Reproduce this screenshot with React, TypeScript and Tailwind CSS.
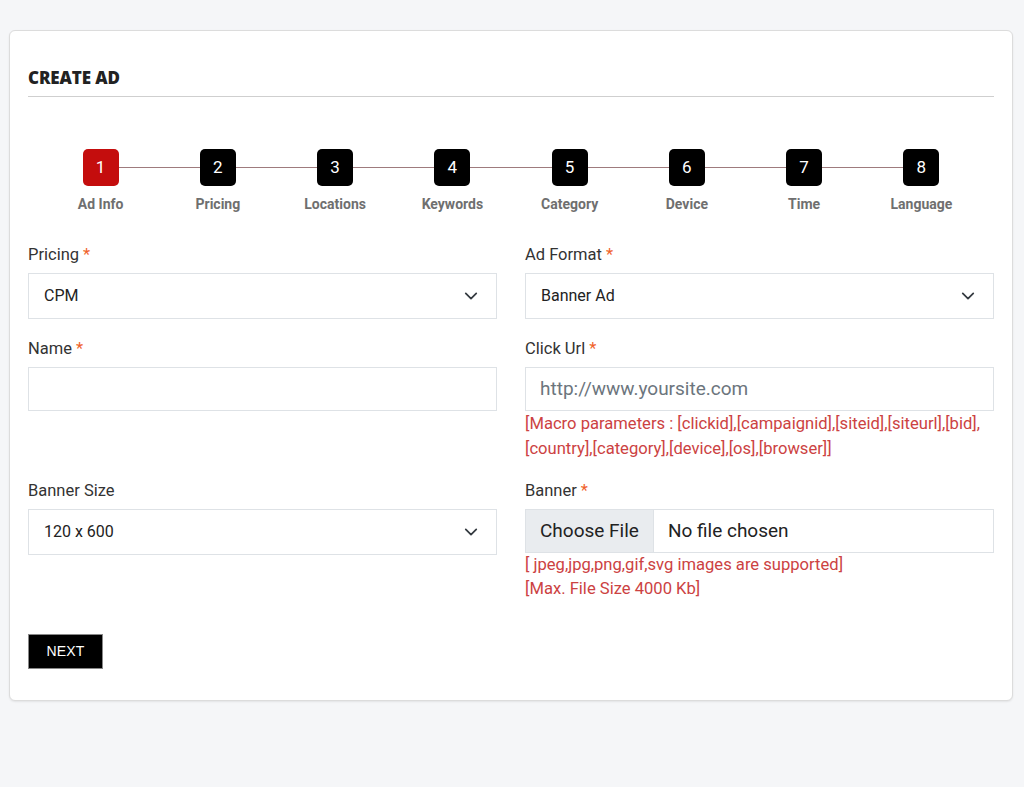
import React from "react";

const steps = ["Ad Info", "Pricing", "Locations", "Keywords", "Category", "Device", "Time", "Language"];

function Chevron() {
  return (
    <svg width="14" height="14" viewBox="0 0 16 16" fill="none" stroke="#343a40" strokeWidth="2" strokeLinecap="round" strokeLinejoin="round">
      <path d="M2 5l6 6 6-6" />
    </svg>
  );
}

function Label({ text, req }: { text: string; req?: boolean }) {
  return (
    <div className="text-[16.5px] leading-[24px] text-[#333] mb-[6px]">
      {text}
      {req && <span className="text-[#f0622a] ml-[4px]">*</span>}
    </div>
  );
}

function Select({ value }: { value: string }) {
  return (
    <div className="h-[46px] border border-[#dee2e6] bg-white flex items-center justify-between pl-[15px] pr-[18px] text-[16px] text-[#222]">
      <span>{value}</span>
      <Chevron />
    </div>
  );
}

export default function App() {
  return (
    <div className="min-h-screen bg-[#f5f6f8] pt-[30px] pl-[9px]" style={{ fontFamily: "Roboto, 'Liberation Sans', sans-serif" }}>
      <div className="w-[1004px] bg-white border border-[#dcdcdc] rounded-[6px] shadow-[0_1px_2px_rgba(0,0,0,0.08)] px-[18px] pt-[35px] pb-[31px]">
        <div className="border-b border-[#cfcfcf] pb-[6px]">
          <h1 className="text-[17px] leading-[24px] font-extrabold text-[#222] tracking-[-0.1px]" style={{ fontFamily: "'Open Sans', Lato, sans-serif" }}>
            CREATE AD
          </h1>
        </div>

        <div className="relative mt-[52px] mx-[14px] flex">
          <div className="absolute left-[58px] right-[58px] top-[18px] h-[1px] bg-[#9e7b7d]" />
          {steps.map((s, i) => (
            <div key={s} className="relative flex-1 flex flex-col items-center">
              <div className={`w-[36px] h-[37px] rounded-[5px] flex items-center justify-center text-white text-[17px] ${i === 0 ? "bg-[#c40d0d]" : "bg-black"}`}>
                {i + 1}
              </div>
              <div className="mt-[10px] text-[14px] leading-[16px] font-bold text-[#6f6f6f]">{s}</div>
            </div>
          ))}
        </div>

        <div className="grid grid-cols-2 gap-x-[28px] gap-y-[18px] mt-[31px]">
          <div>
            <Label text="Pricing" req />
            <Select value="CPM" />
          </div>
          <div>
            <Label text="Ad Format" req />
            <Select value="Banner Ad" />
          </div>
          <div>
            <Label text="Name" req />
            <div className="h-[44px] border border-[#dee2e6] bg-white" />
          </div>
          <div>
            <Label text="Click Url" req />
            <div className="h-[44px] border border-[#dee2e6] bg-white flex items-center px-[14px] text-[19px] text-[#6c757d]">
              http://www.yoursite.com
            </div>
            <div className="text-[16.6px] leading-[25px] text-[#cc4242]">
              [Macro parameters : [clickid],[campaignid],[siteid],[siteurl],[bid],
              <br />
              [country],[category],[device],[os],[browser]]
            </div>
          </div>
          <div>
            <Label text="Banner Size" />
            <Select value="120 x 600" />
          </div>
          <div>
            <Label text="Banner" req />
            <div className="h-[44px] border border-[#dee2e6] bg-white flex items-stretch text-[19px] text-[#222]">
              <div className="bg-[#e9ecef] border-r border-[#dee2e6] px-[14px] flex items-center">Choose File</div>
              <div className="flex items-center pl-[14px]">No file chosen</div>
            </div>
            <div className="text-[16.6px] leading-[24px] text-[#cc4242]">
              <div>[ jpeg,jpg,png,gif,svg images are supported]</div>
              <div>[Max. File Size 4000 Kb]</div>
            </div>
          </div>
        </div>

        <button className="mt-[33px] w-[75px] h-[35px] bg-black text-white text-[14px] tracking-[0.2px] border border-[#888]" style={{ fontFamily: "'Liberation Sans', Arial, sans-serif" }}>
          NEXT
        </button>
      </div>
    </div>
  );
}
